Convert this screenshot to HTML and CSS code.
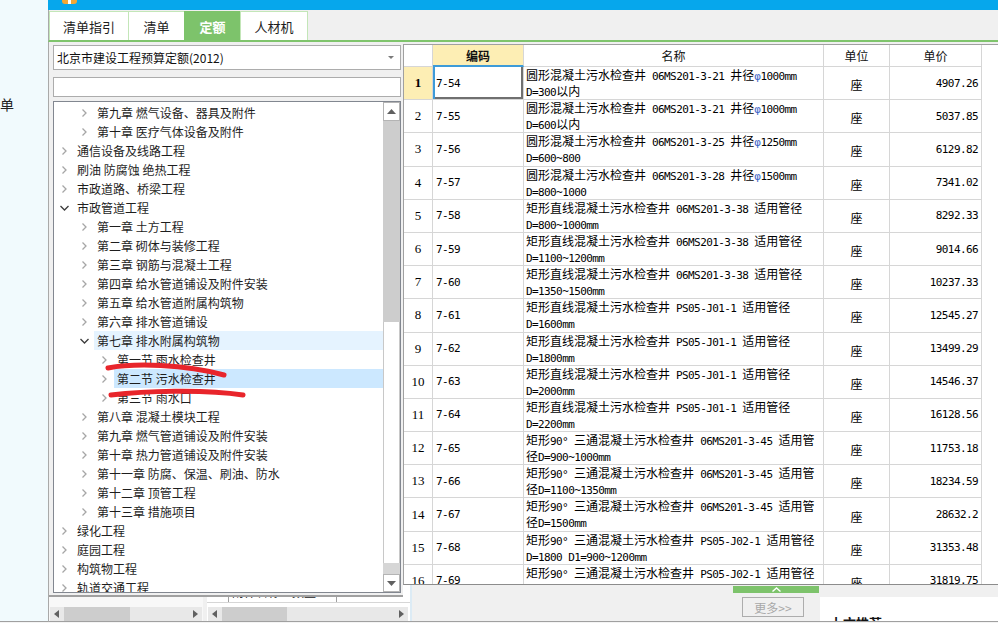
FILE: index.html
```html
<!DOCTYPE html>
<html lang="zh-CN">
<head>
<meta charset="utf-8">
<title>定额</title>
<link rel="stylesheet" href="styles.css">
</head>
<body>
<div class="app">
  <aside class="side"><span class="side-label">清单</span></aside>
  <div class="main">
    <div class="titlebar"><span class="app-icon"></span></div>
    <div class="tabbar">
      <div class="tab t1">清单指引</div>
      <div class="tab t2">清单</div>
      <div class="tab t3 active">定额</div>
      <div class="tab t4">人材机</div>
    </div>
    <div class="content">
      <section class="leftpanel">
        <div class="select"><span>北京市建设工程预算定额(2012)</span><svg class="select-arrow" width="6" height="3" viewBox="0 0 6 3"><path d="M0 0h6L3 3z" fill="#7a7a7a"/></svg></div>
        <div class="search"></div>
        <div class="tree">
          <div class="tree-list">
            <div class="node l2"><svg class="tw" width="9" height="10" viewBox="0 0 9 10"><path d="M2.5 1.5l3.5 3.5-3.5 3.5"/></svg><span class="label">第九章 燃气设备、器具及附件</span></div>
            <div class="node l2"><svg class="tw" width="9" height="10" viewBox="0 0 9 10"><path d="M2.5 1.5l3.5 3.5-3.5 3.5"/></svg><span class="label">第十章 医疗气体设备及附件</span></div>
            <div class="node l1"><svg class="tw" width="9" height="10" viewBox="0 0 9 10"><path d="M2.5 1.5l3.5 3.5-3.5 3.5"/></svg><span class="label">通信设备及线路工程</span></div>
            <div class="node l1"><svg class="tw" width="9" height="10" viewBox="0 0 9 10"><path d="M2.5 1.5l3.5 3.5-3.5 3.5"/></svg><span class="label">刷油 防腐蚀 绝热工程</span></div>
            <div class="node l1"><svg class="tw" width="9" height="10" viewBox="0 0 9 10"><path d="M2.5 1.5l3.5 3.5-3.5 3.5"/></svg><span class="label">市政道路、桥梁工程</span></div>
            <div class="node l1"><svg class="tw open" width="9" height="10" viewBox="0 0 9 10"><path d="M0.5 3l4 4 4-4"/></svg><span class="label">市政管道工程</span></div>
            <div class="node l2"><svg class="tw" width="9" height="10" viewBox="0 0 9 10"><path d="M2.5 1.5l3.5 3.5-3.5 3.5"/></svg><span class="label">第一章 土方工程</span></div>
            <div class="node l2"><svg class="tw" width="9" height="10" viewBox="0 0 9 10"><path d="M2.5 1.5l3.5 3.5-3.5 3.5"/></svg><span class="label">第二章 砌体与装修工程</span></div>
            <div class="node l2"><svg class="tw" width="9" height="10" viewBox="0 0 9 10"><path d="M2.5 1.5l3.5 3.5-3.5 3.5"/></svg><span class="label">第三章 钢筋与混凝土工程</span></div>
            <div class="node l2"><svg class="tw" width="9" height="10" viewBox="0 0 9 10"><path d="M2.5 1.5l3.5 3.5-3.5 3.5"/></svg><span class="label">第四章 给水管道铺设及附件安装</span></div>
            <div class="node l2"><svg class="tw" width="9" height="10" viewBox="0 0 9 10"><path d="M2.5 1.5l3.5 3.5-3.5 3.5"/></svg><span class="label">第五章 给水管道附属构筑物</span></div>
            <div class="node l2"><svg class="tw" width="9" height="10" viewBox="0 0 9 10"><path d="M2.5 1.5l3.5 3.5-3.5 3.5"/></svg><span class="label">第六章 排水管道铺设</span></div>
            <div class="node l2"><svg class="tw open" width="9" height="10" viewBox="0 0 9 10"><path d="M0.5 3l4 4 4-4"/></svg><span class="label hover">第七章 排水附属构筑物</span></div>
            <div class="node l3"><svg class="tw" width="9" height="10" viewBox="0 0 9 10"><path d="M2.5 1.5l3.5 3.5-3.5 3.5"/></svg><span class="label">第一节 雨水检查井</span></div>
            <div class="node l3"><svg class="tw" width="9" height="10" viewBox="0 0 9 10"><path d="M2.5 1.5l3.5 3.5-3.5 3.5"/></svg><span class="label selected">第二节 污水检查井</span></div>
            <div class="node l3"><svg class="tw" width="9" height="10" viewBox="0 0 9 10"><path d="M2.5 1.5l3.5 3.5-3.5 3.5"/></svg><span class="label">第三节 雨水口</span></div>
            <div class="node l2"><svg class="tw" width="9" height="10" viewBox="0 0 9 10"><path d="M2.5 1.5l3.5 3.5-3.5 3.5"/></svg><span class="label">第八章 混凝土模块工程</span></div>
            <div class="node l2"><svg class="tw" width="9" height="10" viewBox="0 0 9 10"><path d="M2.5 1.5l3.5 3.5-3.5 3.5"/></svg><span class="label">第九章 燃气管道铺设及附件安装</span></div>
            <div class="node l2"><svg class="tw" width="9" height="10" viewBox="0 0 9 10"><path d="M2.5 1.5l3.5 3.5-3.5 3.5"/></svg><span class="label">第十章 热力管道铺设及附件安装</span></div>
            <div class="node l2"><svg class="tw" width="9" height="10" viewBox="0 0 9 10"><path d="M2.5 1.5l3.5 3.5-3.5 3.5"/></svg><span class="label">第十一章 防腐、保温、刷油、防水</span></div>
            <div class="node l2"><svg class="tw" width="9" height="10" viewBox="0 0 9 10"><path d="M2.5 1.5l3.5 3.5-3.5 3.5"/></svg><span class="label">第十二章 顶管工程</span></div>
            <div class="node l2"><svg class="tw" width="9" height="10" viewBox="0 0 9 10"><path d="M2.5 1.5l3.5 3.5-3.5 3.5"/></svg><span class="label">第十三章 措施项目</span></div>
            <div class="node l1"><svg class="tw" width="9" height="10" viewBox="0 0 9 10"><path d="M2.5 1.5l3.5 3.5-3.5 3.5"/></svg><span class="label">绿化工程</span></div>
            <div class="node l1"><svg class="tw" width="9" height="10" viewBox="0 0 9 10"><path d="M2.5 1.5l3.5 3.5-3.5 3.5"/></svg><span class="label">庭园工程</span></div>
            <div class="node l1"><svg class="tw" width="9" height="10" viewBox="0 0 9 10"><path d="M2.5 1.5l3.5 3.5-3.5 3.5"/></svg><span class="label">构筑物工程</span></div>
            <div class="node l1"><svg class="tw" width="9" height="10" viewBox="0 0 9 10"><path d="M2.5 1.5l3.5 3.5-3.5 3.5"/></svg><span class="label">轨道交通工程</span></div>
          </div>
          <div class="vscroll">
            <div class="vb"><svg width="9" height="5" viewBox="0 0 9 5"><path d="M0 5L4.5 0 9 5z" fill="#606060"/></svg></div>
            <div class="vthumb"></div>
            <div class="vtrack"></div>
            <div class="vgrip"></div>
            <div class="vb down"><svg width="9" height="5" viewBox="0 0 9 5"><path d="M0 0h9L4.5 5z" fill="#606060"/></svg></div>
          </div>
          <svg class="marks" width="348" height="492" viewBox="0 0 348 492">
            <path d="M54 266 C 80 261, 130 262, 170 273"/>
            <path d="M57 293 C 90 289, 150 287, 189 293"/>
          </svg>
        </div>
      </section>

      <section class="gridwrap">
        <div class="grid">
          <div class="c h"></div><div class="c h h-code">编码</div><div class="c h">名称</div><div class="c h">单位</div><div class="c h">单价</div>

          <div class="c num cur">1</div><div class="c code focus">7-54</div><div class="c name">圆形混凝土污水检查井<span class="lt"> 06MS201-3-21 </span>井径<span class="lt"><i class="phi">φ</i>1000mm</span><br><span class="lt">D=300</span>以内</div><div class="c unit">座</div><div class="c price">4907.26</div>
          <div class="c num">2</div><div class="c code">7-55</div><div class="c name">圆形混凝土污水检查井<span class="lt"> 06MS201-3-21 </span>井径<span class="lt"><i class="phi">φ</i>1000mm</span><br><span class="lt">D=600</span>以内</div><div class="c unit">座</div><div class="c price">5037.85</div>
          <div class="c num">3</div><div class="c code">7-56</div><div class="c name">圆形混凝土污水检查井<span class="lt"> 06MS201-3-25 </span>井径<span class="lt"><i class="phi">φ</i>1250mm</span><br><span class="lt">D=600~800</span></div><div class="c unit">座</div><div class="c price">6129.82</div>
          <div class="c num">4</div><div class="c code">7-57</div><div class="c name">圆形混凝土污水检查井<span class="lt"> 06MS201-3-28 </span>井径<span class="lt"><i class="phi">φ</i>1500mm</span><br><span class="lt">D=800~1000</span></div><div class="c unit">座</div><div class="c price">7341.02</div>
          <div class="c num">5</div><div class="c code">7-58</div><div class="c name">矩形直线混凝土污水检查井<span class="lt"> 06MS201-3-38 </span>适用管径<br><span class="lt">D=800~1000mm</span></div><div class="c unit">座</div><div class="c price">8292.33</div>
          <div class="c num">6</div><div class="c code">7-59</div><div class="c name">矩形直线混凝土污水检查井<span class="lt"> 06MS201-3-38 </span>适用管径<br><span class="lt">D=1100~1200mm</span></div><div class="c unit">座</div><div class="c price">9014.66</div>
          <div class="c num">7</div><div class="c code">7-60</div><div class="c name">矩形直线混凝土污水检查井<span class="lt"> 06MS201-3-38 </span>适用管径<br><span class="lt">D=1350~1500mm</span></div><div class="c unit">座</div><div class="c price">10237.33</div>
          <div class="c num">8</div><div class="c code">7-61</div><div class="c name">矩形直线混凝土污水检查井<span class="lt"> PS05-J01-1 </span>适用管径<br><span class="lt">D=1600mm</span></div><div class="c unit">座</div><div class="c price">12545.27</div>
          <div class="c num">9</div><div class="c code">7-62</div><div class="c name">矩形直线混凝土污水检查井<span class="lt"> PS05-J01-1 </span>适用管径<br><span class="lt">D=1800mm</span></div><div class="c unit">座</div><div class="c price">13499.29</div>
          <div class="c num">10</div><div class="c code">7-63</div><div class="c name">矩形直线混凝土污水检查井<span class="lt"> PS05-J01-1 </span>适用管径<br><span class="lt">D=2000mm</span></div><div class="c unit">座</div><div class="c price">14546.37</div>
          <div class="c num">11</div><div class="c code">7-64</div><div class="c name">矩形直线混凝土污水检查井<span class="lt"> PS05-J01-1 </span>适用管径<br><span class="lt">D=2200mm</span></div><div class="c unit">座</div><div class="c price">16128.56</div>
          <div class="c num">12</div><div class="c code">7-65</div><div class="c name">矩形<span class="lt">90° </span>三通混凝土污水检查井<span class="lt"> 06MS201-3-45 </span>适用管<br>径<span class="lt">D=900~1000mm</span></div><div class="c unit">座</div><div class="c price">11753.18</div>
          <div class="c num">13</div><div class="c code">7-66</div><div class="c name">矩形<span class="lt">90° </span>三通混凝土污水检查井<span class="lt"> 06MS201-3-45 </span>适用管<br>径<span class="lt">D=1100~1350mm</span></div><div class="c unit">座</div><div class="c price">18234.59</div>
          <div class="c num">14</div><div class="c code">7-67</div><div class="c name">矩形<span class="lt">90° </span>三通混凝土污水检查井<span class="lt"> 06MS201-3-45 </span>适用管<br>径<span class="lt">D=1500mm</span></div><div class="c unit">座</div><div class="c price">28632.2</div>
          <div class="c num">15</div><div class="c code">7-68</div><div class="c name">矩形<span class="lt">90° </span>三通混凝土污水检查井<span class="lt"> PS05-J02-1 </span>适用管径<br><span class="lt">D=1800 D1=900~1200mm</span></div><div class="c unit">座</div><div class="c price">31353.48</div>
          <div class="c num">16</div><div class="c code">7-69</div><div class="c name">矩形<span class="lt">90° </span>三通混凝土污水检查井<span class="lt"> PS05-J02-1 </span>适用管径</div><div class="c unit">座</div><div class="c price">31819.75</div>
        </div>
      </section>

      <div class="under">
        <div class="under-l">
          <div class="peek-l"></div>
          <div class="hscroll s1">
            <span class="hb"><svg width="5" height="8" viewBox="0 0 5 8"><path d="M5 0L0 4l5 4z" fill="#606060"/></svg></span>
            <span class="thumb"></span><span class="track"></span>
            <span class="hb"><svg width="5" height="8" viewBox="0 0 5 8"><path d="M0 0l5 4-5 4z" fill="#606060"/></svg></span>
          </div>
        </div>
        <div class="under-sep"></div>
        <div class="under-r">
          <div class="peek"><span class="pk1">-</span><span class="pk2">附件名称：数量</span><span class="pk3"></span></div>
          <div class="hscroll s2">
            <span class="hb"><svg width="5" height="8" viewBox="0 0 5 8"><path d="M5 0L0 4l5 4z" fill="#606060"/></svg></span>
            <span class="thumb"></span><span class="track"></span>
            <span class="hb"><svg width="5" height="8" viewBox="0 0 5 8"><path d="M0 0l5 4-5 4z" fill="#606060"/></svg></span>
          </div>
        </div>
        <div class="under-sep2"></div>
      </div>

      <div class="bottombar">
        <div class="pull"><svg width="9" height="5" viewBox="0 0 9 5"><path d="M0.5 4.5l4-3.5 4 3.5" fill="none" stroke="#fff" stroke-width="1.4"/></svg></div>
        <div class="bb-row">
          <div class="more-btn">更多&gt;&gt;</div>
          <div class="rec"><span class="rec-title">上文推荐</span></div>
        </div>
      </div>
    </div>
  </div>
</div>
</body>
</html>
```

FILE: styles.css
```css
* { box-sizing: border-box; }
html, body { margin: 0; padding: 0; }
body {
  width: 998px;
  height: 623px;
  overflow: hidden;
  background: #f4f4f4;
  font-family: "Noto Sans CJK SC", "Microsoft YaHei", sans-serif;
  font-size: 12px;
  color: #1a1a1a;
}
.app { display: flex; height: 622px; }

/* left underlying strip */
.side {
  width: 48px;
  flex: none;
  background: #f1fafd;
  border-bottom: 1px solid #a0a0a0;
  overflow: hidden;
}
.side-label {
  display: block;
  margin: 96px 0 0 -14px;
  font-size: 14px;
  line-height: 16px;
  color: #222;
  white-space: nowrap;
}

.main { flex: 1; min-width: 0; display: flex; flex-direction: column; }

.titlebar { height: 10px; flex: none; background: #06a7ec; padding-left: 14px; }
.app-icon {
  display: block;
  width: 15px;
  height: 4px;
  border-radius: 0 0 3px 3px;
  background: linear-gradient(90deg, #f5a733 0 6px, #fff 6px 9px, #f5a733 9px);
}

/* tabs */
.tabbar {
  height: 32px;
  flex: none;
  display: flex;
  align-items: flex-end;
  background: #f0f0f0;
  border-left: 1px solid #a9a9a9;
  border-bottom: 2px solid #7fc46c;
}
.tab {
  height: 29px;
  display: flex;
  align-items: center;
  justify-content: center;
  background: #fff;
  border: 1px solid #c3e6b8;
  border-bottom: none;
  margin-right: -1px;
  font-size: 13px;
  color: #1e1e1e;
}
.t1 { width: 80px; }
.t2 { width: 57px; }
.t3 { width: 57px; }
.t4 { width: 68px; }
.tab.active { background: #7dc36b; border-color: #7dc36b; color: #fff; font-weight: bold; }

/* content grid */
.content {
  flex: 1;
  min-height: 0;
  display: grid;
  grid-template-columns: 354px 9px 1fr;
  grid-template-rows: 543px 12px 1fr;
  border-left: 1px solid #a9a9a9;
  background: #f0f0f0;
}

/* left panel */
.leftpanel {
  grid-column: 1;
  grid-row: 1 / 3;
  z-index: 2;
  display: flex;
  flex-direction: column;
  padding: 3px 0 0 4px;
  background: #f0f0f0;
  border-bottom: 2px solid #a0a0a0;
}
.select {
  width: 348px;
  height: 25px;
  flex: none;
  display: flex;
  align-items: center;
  justify-content: space-between;
  padding: 0 6px 0 3px;
  background: #fff;
  border: 1px solid #acacac;
  color: #111;
}
.search {
  width: 348px;
  height: 20px;
  flex: none;
  margin-top: 7px;
  background: #fff;
  border: 1px solid #acacac;
}
.tree {
  position: relative;
  width: 348px;
  height: 492px;
  flex: none;
  margin-top: 4px;
  display: flex;
  background: #fff;
  border: 1px solid #828790;
  overflow: hidden;
}
.tree-list { width: 329px; padding-top: 1px; overflow: hidden; }
.node {
  height: 19px;
  display: flex;
  align-items: stretch;
  white-space: nowrap;
  color: #1e1e1e;
}
.node.l1 { padding-left: 6px; }
.node.l2 { padding-left: 26px; }
.node.l3 { padding-left: 46px; }
.tw {
  flex: none;
  align-self: center;
  margin-right: 5px;
  fill: none;
  stroke: #a6a6a6;
  stroke-width: 1.3;
}
.tw.open { stroke: #3c3c3c; }
.label { flex: 1; padding-left: 3px; line-height: 19px; }
.label.hover { background: #e5f3ff; }
.label.selected { background: #cce8ff; }

.vscroll { width: 17px; flex: none; display: flex; flex-direction: column; background: #fff; }
.vb {
  height: 19px;
  flex: none;
  display: flex;
  align-items: center;
  justify-content: center;
  background: #fff;
  border: 1px solid #b4b4b4;
}
.vb.down { height: 18px; }
.vthumb { height: 201px; flex: none; background: #cdcdcd; }
.vtrack { flex: 1; border-left: 1px solid #c8c8c8; border-right: 1px solid #c8c8c8; }
.vgrip { height: 11px; flex: none; background: #d6d6d6; }

.marks {
  position: absolute;
  left: 0;
  top: 0;
  pointer-events: none;
  fill: none;
  stroke: #e8252b;
  stroke-width: 5;
  stroke-linecap: round;
}

/* right table */
.gridwrap {
  grid-column: 2 / 4;
  grid-row: 1;
  margin-top: 2px;
  background: #fff;
  border-top: 1px solid #a0a0a0;
  border-left: 1px solid #a0a0a0;
  border-bottom: 1px solid #8c8c8c;
  overflow: hidden;
}
.grid {
  display: grid;
  width: 578px;
  grid-template-columns: 29px 91px 300px 66px 92px;
  grid-template-rows: 22px;
  grid-auto-rows: 33.2px;
  color: #000;
}
.c {
  border-right: 1px solid #d6d6d6;
  border-bottom: 1px solid #d6d6d6;
  overflow: hidden;
  white-space: nowrap;
}
.h { display: flex; align-items: center; justify-content: center; color: #111; }
.h-code { background: #fdeeb4; font-weight: bold; border-bottom: 2px solid #3d9bd8; }
.num {
  display: flex;
  align-items: center;
  justify-content: center;
  font-family: "Liberation Serif", "Noto Sans CJK SC", serif;
  font-size: 13px;
}
.num.cur { background: #fdeeb4; font-weight: bold; }
.code {
  display: flex;
  align-items: center;
  padding-left: 3px;
  font-family: "DejaVu Sans Mono", monospace;
  font-size: 11px;
  letter-spacing: -0.6px;
}
.code.focus { box-shadow: inset 2px 0 0 #3d9bd8, inset -2px -2px 0 #707070; }
.name { padding: 0 2px; line-height: 16px; }
.lt {
  font-family: "DejaVu Sans Mono", monospace;
  font-size: 11px;
  line-height: 10px;
  letter-spacing: -0.6px;
  white-space: pre;
}
.phi { font-style: normal; color: #3f67c8; }
.unit { display: flex; align-items: center; justify-content: center; padding-top: 3px; }
.price {
  display: flex;
  align-items: center;
  justify-content: flex-end;
  padding-right: 3px;
  font-family: "DejaVu Sans Mono", monospace;
  font-size: 11px;
  letter-spacing: -0.6px;
}

/* underlying bottom-left area */
.under {
  grid-column: 1 / 3;
  grid-row: 2 / 4;
  display: flex;
  background: #f0f0f0;
  border-bottom: 1px solid #a0a0a0;
}
.under-l { width: 154px; flex: none; display: flex; flex-direction: column; background: #f8f8f8; }
.peek-l { height: 22px; flex: none; }
.under-sep { width: 4px; flex: none; background: #f0f0f0; }
.under-r { width: 203px; flex: none; display: flex; flex-direction: column; background: #fff; }
.under-sep2 { width: 2px; flex: none; background: #dcebf5; }
.peek {
  height: 18px;
  flex: none;
  margin-bottom: 4px;
  display: flex;
  align-items: flex-end;
  border-bottom: 1px solid #d6d6d6;
  line-height: 14px;
  color: #222;
}
.pk1 { width: 22px; padding-left: 11px; border-right: 1px solid #a0a0a0; height: 17px; }
.pk2 { width: 108px; padding-left: 3px; border-right: 1px solid #a0a0a0; height: 17px; }
.pk3 { flex: 1; }

.hscroll { height: 14px; flex: none; display: flex; background: #e8e8e8; }
.s1 { margin-left: 1px; width: 152px; }
.s2 { margin-left: 1px; width: 200px; }
.hb { width: 13px; flex: none; display: flex; align-items: center; justify-content: center; }
.thumb { flex: none; margin-left: 1px; background: #cdcdcd; }
.s1 .thumb { width: 66px; }
.s2 .thumb { width: 65px; }
.track { flex: 1; }

/* bottom bar of the right pane */
.bottombar {
  grid-column: 3;
  grid-row: 2 / 4;
  display: flex;
  flex-direction: column;
  background: #f0f0f0;
  border-bottom: 1px solid #a0a0a0;
}
.pull {
  width: 86px;
  height: 7px;
  margin: 1px 0 0 321px;
  flex: none;
  display: flex;
  align-items: center;
  justify-content: center;
  background: #7dc36b;
}
.bb-row { flex: 1; display: flex; margin-top: 4px; min-height: 0; }
.more-btn {
  width: 62px;
  height: 20px;
  margin-left: 330px;
  flex: none;
  display: flex;
  align-items: center;
  justify-content: center;
  background: #f0f0f0;
  border: 1px solid #adadad;
  color: #a8a8a8;
  font-size: 12px;
}
.rec {
  flex: 1;
  margin-left: 16px;
  background: #fff;
  padding: 17px 0 0 10px;
  overflow: hidden;
}
.rec-title { font-size: 13px; font-weight: bold; line-height: 16px; color: #111; }
```
